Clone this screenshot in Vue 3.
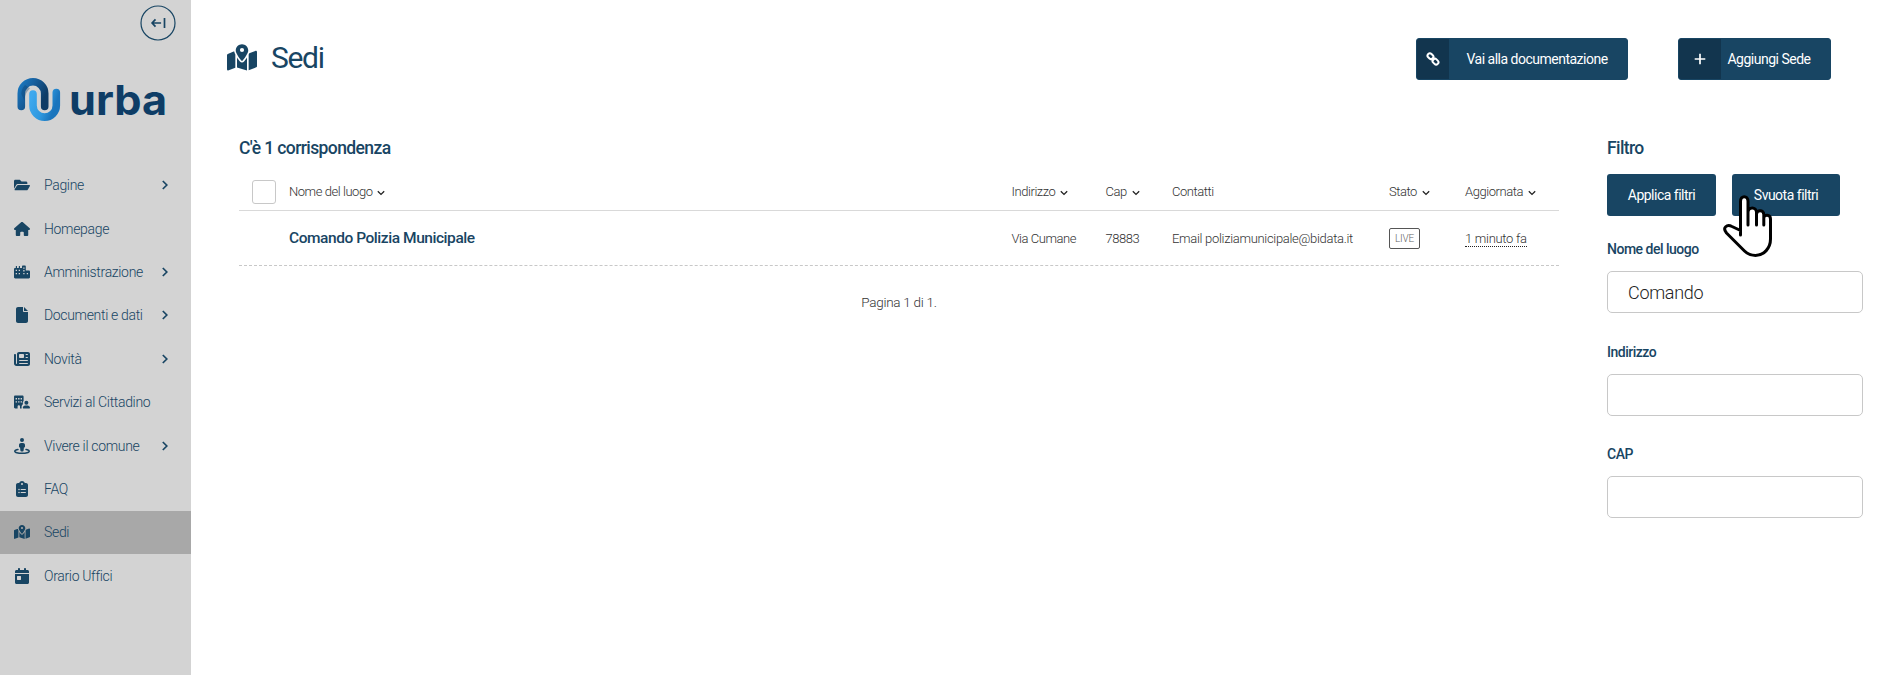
<template>
  <div class="wrapper">
    <aside class="sidebar">
      <button class="collapse" aria-label="Comprimi">
        <svg viewBox="0 0 36 36"><circle cx="18" cy="18" r="17" /><path class="arrow" d="M15.500 14.300 12.100 18 15.500 21.700M12.500 18h8.600M24.500 13v10" /></svg>
      </button>
      <svg class="logo" viewBox="0 0 150 46">
        <defs>
          <linearGradient id="dark" x1="0" y1="0" x2="1" y2="0.6">
            <stop offset="0" stop-color="#1976bd" />
            <stop offset="0.4" stop-color="#17609f" />
            <stop offset="1" stop-color="#0e3c66" />
          </linearGradient>
          <linearGradient id="light" x1="0" y1="0" x2="1" y2="0.4">
            <stop offset="0" stop-color="#3fa9ee" />
            <stop offset="0.6" stop-color="#2d97de" />
            <stop offset="1" stop-color="#1a75bd" />
          </linearGradient>
        </defs>
        <path class="wave" stroke="url(#light)" d="M16 17v11.500a11.600 11.600 0 0 0 23.300 0V15.500" />
        <path class="wave" stroke="url(#dark)" d="M4.300 29.500V16.500a11.700 11.700 0 0 1 23.400 0V29.500" />
        <path class="fold" d="M7.500 24c.3-6 2-9.500 5.500-12.500L8 8C5.500 10.500 4.500 13 4.300 17z" />
        <text x="52" y="37.500" textLength="98" lengthAdjust="spacingAndGlyphs">urba</text>
      </svg>
      <ul class="menu">
        <li v-for="item in menu" :key="item.label" :class="{ active: item.label === current }" @click="current = item.label">
          <svg class="menu-icon" :viewBox="icons[item.icon].box"><path fill-rule="evenodd" :d="icons[item.icon].d" /></svg>
          <span>{{ item.label }}</span>
          <svg v-if="item.children" class="chevron" viewBox="0 0 8 10"><path d="m1.800 1 4 4-4 4" /></svg>
        </li>
      </ul>
    </aside>

    <main class="content">
      <header class="page-header">
        <svg class="title-icon" :viewBox="icons.map.box"><path fill-rule="evenodd" :d="icons.map.d" /></svg>
        <h1>Sedi</h1>
        <button class="btn btn-icon docs">
          <span class="btn-glyph">
            <svg class="link" viewBox="0 0 14 14"><rect x="1.300" y="2" width="6.400" height="4.600" rx="2.300" transform="rotate(45 4.500 4.300)" /><rect x="6.300" y="7.300" width="6.400" height="4.600" rx="2.300" transform="rotate(45 9.500 9.600)" /><path d="m5.700 5.700 2.600 2.600" /></svg>
          </span>
          <span class="btn-text">Vai alla documentazione</span>
        </button>
        <button class="btn btn-icon add">
          <span class="btn-glyph"><svg class="plus" viewBox="0 0 12 12"><path d="M6 .7v10.600M.7 6h10.600" /></svg></span>
          <span class="btn-text">Aggiungi Sede</span>
        </button>
      </header>

      <div class="columns">
        <section class="results">
          <h2>C'è 1 corrispondenza</h2>
          <div class="row head">
            <span class="check"></span>
            <span v-for="col in columns" :key="col.label">
              {{ col.label }}
              <svg v-if="col.sortable" class="sort" viewBox="0 0 8 6"><path d="m.8 1.200 3.200 3.200 3.200-3.200" /></svg>
            </span>
          </div>
          <div v-for="place in places" :key="place.name" class="row body">
            <i></i>
            <strong>{{ place.name }}</strong>
            <span>{{ place.address }}</span>
            <span>{{ place.cap }}</span>
            <span class="mail">{{ place.contact }}</span>
            <span><b class="status">{{ place.status }}</b></span>
            <span><u>{{ place.updated }}</u></span>
          </div>
          <p class="pagination">Pagina 1 di 1.</p>
        </section>

        <section class="filters">
          <h2>Filtro</h2>
          <div class="filter-actions">
            <button class="btn">Applica filtri</button>
            <button class="btn clear">
              Svuota filtri
              <svg class="hand" viewBox="0 0 50 64"><path d="M17.500 41V7.500C17.500 1 25 1 25 7.500V31M25 31V18.500c0-6 8.500-6 8.500 0V31M33.500 31V20.500c0-5 7.300-5 7.300 0V31M40.800 31V24.500c0-4.500 6.700-4.500 6.700.5v20C47.500 54 41 61.500 32.500 61.500c-5 0-8-1.500-11-4.500L3.500 39C-1 33.500 4 30 9 32.500l8.500 4" /></svg>
            </button>
          </div>
          <label v-for="field in fields" :key="field.label">
            <span>{{ field.label }}</span>
            <input v-model="field.value" type="text" />
          </label>
        </section>
      </div>
    </main>
  </div>
</template>

<script setup>
import { ref, reactive } from 'vue'

const current = ref('Sedi')

const menu = [
  { label: 'Pagine', icon: 'folder', children: true },
  { label: 'Homepage', icon: 'home' },
  { label: 'Amministrazione', icon: 'city', children: true },
  { label: 'Documenti e dati', icon: 'file', children: true },
  { label: 'Novità', icon: 'news', children: true },
  { label: 'Servizi al Cittadino', icon: 'building' },
  { label: 'Vivere il comune', icon: 'street', children: true },
  { label: 'FAQ', icon: 'clipboard' },
  { label: 'Sedi', icon: 'map' },
  { label: 'Orario Uffici', icon: 'calendar' }
]

const columns = [
  { label: 'Nome del luogo', sortable: true },
  { label: 'Indirizzo', sortable: true },
  { label: 'Cap', sortable: true },
  { label: 'Contatti' },
  { label: 'Stato', sortable: true },
  { label: 'Aggiornata', sortable: true }
]

const places = [
  { name: 'Comando Polizia Municipale', address: 'Via Cumane', cap: '78883', contact: 'Email poliziamunicipale@bidata.it', status: 'LIVE', updated: '1 minuto fa' }
]

const fields = reactive([
  { label: 'Nome del luogo', value: 'Comando' },
  { label: 'Indirizzo', value: '' },
  { label: 'CAP', value: '' }
])

const icons = {
  folder: { box: '0 0 576 512', d: 'M572.694 292.093L500.27 416.248A63.997 63.997 0 0 1 444.989 448H45.025c-18.523 0-30.064-20.093-20.731-36.093l72.424-124.155A64 64 0 0 1 152 256h399.964c18.523 0 30.064 20.093 20.73 36.093zM152 224h328v-48c0-26.51-21.49-48-48-48H272l-64-64H48C21.49 64 0 85.49 0 112v278.046l69.077-118.418C86.214 242.25 117.989 224 152 224z' },
  home: { box: '0 0 576 512', d: 'M575.8 255.5c0 18-15 32.1-32 32.1h-32l.7 160.2V472c0 22.1-17.9 40-40 40H392c-22.1 0-40-17.9-40-40V384c0-17.7-14.3-32-32-32H256c-17.7 0-32 14.3-32 32v88c0 22.1-17.9 40-40 40H104c-22.1 0-40-17.9-40-40V287.600H32c-18 0-32-14-32-32.100c0-9 3-17 10-24L266.400 8c7-7 15-8 22-8s15 2 21 7L564.800 231.500c8 7 12 15 11 24z' },
  city: { box: '0 0 640 512', d: 'M320 40c0-22 18-40 40-40h72c22 0 40 18 40 40v152h120c26 0 48 22 48 48v224c0 26-22 48-48 48H48c-26 0-48-22-48-48V144c0-26 22-48 48-48h24V32c0-22 48-22 48 0v64h72V32c0-22 48-22 48 0v64h80V40zM68 168v52h52v-52H68zm120 0v52h52v-52h-52zM68 296v52h52v-52H68zm120 0v52h52v-52h-52zM370 72v52h52V72h-52zm0 108v52h52v-52h-52zm0 116v52h52v-52h-52zm140 0v52h52v-52h-52z' },
  file: { box: '0 0 384 512', d: 'M0 64C0 28.700 28.700 0 64 0H224V128c0 17.700 14.300 32 32 32H384V448c0 35.300-28.700 64-64 64H64c-35.300 0-64-28.700-64-64V64zm384 64H256V0L384 128z' },
  news: { box: '0 0 512 512', d: 'M96 96c0-35.300 28.700-64 64-64H448c35.300 0 64 28.700 64 64V416c0 35.300-28.700 64-64 64H80c-44.200 0-80-35.800-80-80V128c0-17.700 14.300-32 32-32s32 14.300 32 32V400c0 8.800 7.200 16 16 16s16-7.200 16-16V96zm64 24v80c0 13.300 10.700 24 24 24H296c13.300 0 24-10.700 24-24V120c0-13.300-10.700-24-24-24H184c-13.300 0-24 10.700-24 24zm208-8c0 8.800 7.200 16 16 16h48c8.800 0 16-7.200 16-16s-7.200-16-16-16H384c-8.800 0-16 7.200-16 16zm0 96c0 8.800 7.200 16 16 16h48c8.800 0 16-7.200 16-16s-7.200-16-16-16H384c-8.800 0-16 7.200-16 16zM160 304c0 8.800 7.200 16 16 16H432c8.800 0 16-7.200 16-16s-7.200-16-16-16H176c-8.800 0-16 7.200-16 16zm0 96c0 8.800 7.200 16 16 16H432c8.800 0 16-7.200 16-16s-7.200-16-16-16H176c-8.800 0-16 7.200-16 16z' },
  building: { box: '0 0 640 512', d: 'M48 0h288c26 0 48 22 48 48v170c-34 28-44 76-20 118-32 20-54 52-60 92v84h-64v-80c0-64-96-64-96 0v80H48c-26 0-48-22-48-48V48C0 22 22 0 48 0zM64 96v56h56V96H64zm100 0v56h56V96h-56zm100 0v56h56V96h-56zM64 224v56h56v-56H64zm100 0v56h56v-56h-56zm100 0v56h56v-56h-56zM496 208a80 80 0 1 0 0 160 80 80 0 1 0 0-160zM448 400h96c54 0 96 42 96 90 0 12-8 22-22 22H374c-14 0-22-10-22-22 0-48 42-90 96-90z' },
  street: { box: '0 0 512 512', d: 'M320 64A64 64 0 1 0 192 64a64 64 0 1 0 128 0zm-96 96c-35.300 0-64 28.700-64 64v48c0 17.700 14.300 32 32 32h1.800l11.100 99.500c1.800 16.200 15.500 28.500 31.800 28.500h38.700c16.300 0 30-12.300 31.800-28.500L318.200 304H320c17.700 0 32-14.300 32-32V224c0-35.300-28.700-64-64-64H224zM132.300 394.200c13-2.400 21.700-14.900 19.300-27.900s-14.900-21.700-27.900-19.300c-32.400 5.900-60.900 14.200-82 24.800c-10.500 5.300-20.300 11.700-27.800 19.600C6.400 399.500 0 410.500 0 424c0 21.400 15.500 36.100 29.100 45c14.700 9.600 34.300 17.300 56.400 23.400C130.200 504.700 190.400 512 256 512s125.800-7.300 170.400-19.600c22.100-6.100 41.800-13.800 56.400-23.400c13.700-8.900 29.100-23.600 29.100-45c0-13.500-6.400-24.500-14-32.600c-7.500-7.900-17.300-14.300-27.800-19.600c-21-10.600-49.500-18.900-82-24.800c-13-2.400-25.500 6.300-27.900 19.300s6.300 25.500 19.300 27.900c30.200 5.500 53.700 12.800 69 20.500c3.200 1.600 5.800 3.100 7.900 4.500c3.600 2.400 3.600 7.200 0 9.600c-8.800 5.700-23.100 11.800-43 17.300C374.300 457 318.500 464 256 464s-118.300-7-157.700-17.900c-19.900-5.500-34.200-11.600-43-17.300c-3.600-2.400-3.600-7.200 0-9.600c2.100-1.400 4.800-2.900 7.900-4.500c15.300-7.700 38.800-14.900 69-20.500z' },
  clipboard: { box: '0 0 384 512', d: 'M192 0c-41.800 0-77.400 26.700-90.500 64H64C28.700 64 0 92.700 0 128V448c0 35.300 28.700 64 64 64H320c35.300 0 64-28.700 64-64V128c0-35.300-28.700-64-64-64H282.500C269.400 26.700 233.800 0 192 0zm0 64a32 32 0 1 1 0 64 32 32 0 1 1 0-64zM72 272a24 24 0 1 1 48 0 24 24 0 1 1-48 0zm88-16H304c21 0 21 32 0 32H160c-21 0-21-32 0-32zM72 368a24 24 0 1 1 48 0 24 24 0 1 1-48 0zm88-16H304c21 0 21 32 0 32H160c-21 0-21-32 0-32z' },
  map: { box: '0 0 576 512', d: 'M408 120c0 54.600-73.100 151.900-105.200 192c-7.700 9.600-22 9.600-29.600 0C241.100 271.900 168 174.600 168 120C168 53.700 221.700 0 288 0s120 53.700 120 120zm8 80.400c3.500-6.900 6.700-13.800 9.600-20.600c.5-1.200 1-2.500 1.500-3.700l116-46.400C558.900 123.400 576 135 576 152V422.800c0 9.800-6 18.600-15.100 22.300L416 503V200.400zM137.600 138.300c2.400 14.100 7.200 28.300 12.800 41.500c2.900 6.800 6.100 13.700 9.600 20.600V451.800L32.900 502.700C17.100 509 0 497.400 0 480.400V209.600c0-9.800 6-18.600 15.100-22.300l122.600-49zM327.800 332c13.900-17.400 35.700-45.700 56.200-77V504.300L192 449.400V255c20.500 31.300 42.300 59.600 56.200 77c20.500 25.600 59.100 25.600 79.600 0zM288 152a40 40 0 1 0 0-80 40 40 0 1 0 0 80z' },
  calendar: { box: '0 0 448 512', d: 'M128 0c17.700 0 32 14.300 32 32V64H288V32c0-17.700 14.300-32 32-32s32 14.300 32 32V64h48c26.500 0 48 21.500 48 48v48H0V112C0 85.500 21.500 64 48 64H96V32c0-17.700 14.300-32 32-32zM0 192H448V464c0 26.500-21.500 48-48 48H48c-26.500 0-48-21.500-48-48V192zm80 64c-8.800 0-16 7.200-16 16v96c0 8.800 7.200 16 16 16h96c8.800 0 16-7.200 16-16V272c0-8.800-7.200-16-16-16H80z' }
}
</script>

<style>
body { margin: 0; background: #fff; }
</style>

<style scoped>
.wrapper { display: flex; height: 675px; overflow: hidden; font-family: Roboto, "Open Sans", sans-serif; font-size: 14px; color: #333; white-space: nowrap; }
.wrapper * { box-sizing: border-box; }
button, input { font-family: inherit; }

/* sidebar */
.sidebar { width: 191px; flex: none; background: #d3d3d3; display: flex; flex-direction: column; color: #184563; }
.collapse { width: 36px; height: 36px; margin: 5px 0 0 139.5px; padding: 0; border: 0; background: none; }
.collapse svg { display: block; fill: none; stroke: #184563; stroke-width: 1.2; }
.collapse .arrow { stroke-width: 1.7; }
.logo { width: 150px; height: 46px; margin: 35.5px 0 0 17px; overflow: visible; }
.logo text { font: 700 41px Inter, sans-serif; fill: #0e3d66; }
.wave { fill: none; stroke-width: 7.6; stroke-linecap: round; }
.fold { fill: #0e3c66; opacity: 0.35; }
.menu { list-style: none; margin: 41px 0 0; padding: 0; }
.menu li { display: flex; align-items: center; height: 43.4px; padding: 0 22px 0 14px; font-weight: 300; letter-spacing: -0.33px; cursor: pointer; }
.menu li.active { background: #a8a8a8; }
.menu-icon { width: 16px; height: 16px; margin-right: 14px; fill: #184563; }
.chevron { width: 8px; height: 10px; margin-left: auto; fill: none; stroke: #184563; stroke-width: 1.7; }

/* page header */
.content { flex: 1; min-width: 0; }
.page-header { display: flex; align-items: center; height: 118px; padding: 0 48px 0 36px; }
.title-icon { width: 30px; height: 27px; margin: 0 14px 3px 0; fill: #184563; }
h1 { margin: 0 auto 4px 0; font-size: 30px; font-weight: 400; letter-spacing: -1.3px; color: #184563; }
.btn { height: 42px; padding: 0; border: 0; border-radius: 3px; background: #184563; color: #fff; font-size: 14px; letter-spacing: -0.5px; }
.btn-icon { display: flex; align-items: center; overflow: hidden; border: 1px solid #184563; }
.btn-glyph { display: flex; align-items: center; justify-content: center; height: 100%; background: #12354e; }
.btn-text { flex: 1; text-align: center; }
.docs { width: 212px; margin-right: 50px; }
.docs .btn-glyph { width: 32px; }
.docs .btn-text { padding-right: 2px; }
.add { width: 153px; }
.add .btn-glyph { width: 42px; }
.add .btn-text { padding-right: 13px; }
.link { width: 14px; height: 14px; fill: none; stroke: #fff; stroke-width: 2; }
.plus { width: 12px; height: 12px; fill: none; stroke: #fff; stroke-width: 1.7; }

/* results table */
.columns { display: flex; gap: 48px; padding: 18px 16px 0 48px; }
.results { width: 1320px; }
h2 { margin: 0; height: 24px; line-height: 24px; font-size: 17.5px; font-weight: 500; letter-spacing: -0.6px; color: #184563; }
.row { display: grid; grid-template-columns: 50px 722.5px 94px 66.5px 217px 76px 94px; align-items: center; font-size: 13px; font-weight: 300; letter-spacing: -0.45px; }
.head { height: 51px; padding-top: 13px; border-bottom: 1px solid #d9d9d9; }
.check { width: 24px; height: 24px; margin-left: 13px; border: 1px solid #c8c8c8; border-radius: 3px; }
.sort { width: 8px; height: 6px; margin-left: 2px; fill: none; stroke: #222; stroke-width: 1.3; }
.body { height: 55px; border-bottom: 1px dashed #c8c8c8; }
.body strong { font-size: 15.5px; font-weight: 500; letter-spacing: -0.45px; color: #184563; }
.mail { letter-spacing: -0.31px; }
.status { display: inline-block; height: 21px; width: 31px; border: 1px solid #555; border-radius: 2px; font-size: 10px; font-weight: 300; line-height: 19px; text-align: center; color: #666; letter-spacing: -0.2px; }
.row u { text-decoration: none; letter-spacing: -0.3px; border-bottom: 1px dotted #222; }
.pagination { margin: 27px 0 0; text-align: center; line-height: 18px; font-size: 13.5px; font-weight: 300; letter-spacing: -0.28px; }

/* filters */
.filters { width: 256px; }
.filter-actions { display: flex; gap: 16px; margin-top: 14px; margin-bottom: 23px; }
.filter-actions .btn { width: 109px; }
.filter-actions .clear { position: relative; width: 108px; }
.hand { position: absolute; left: -9px; top: 20px; width: 50px; height: 64px; fill: #fff; stroke: #000; stroke-width: 3; stroke-linejoin: round; stroke-linecap: round; }
label { display: block; height: 102.5px; }
label span { display: block; height: 20px; margin-bottom: 12px; line-height: 20px; font-size: 14px; font-weight: 500; letter-spacing: -0.5px; color: #184563; }
input { display: block; width: 256px; height: 42px; padding: 0 20px; border: 1px solid #c8c8c8; border-radius: 5px; font-size: 18px; font-weight: 300; letter-spacing: -0.3px; color: #222; outline: none; }
</style>
